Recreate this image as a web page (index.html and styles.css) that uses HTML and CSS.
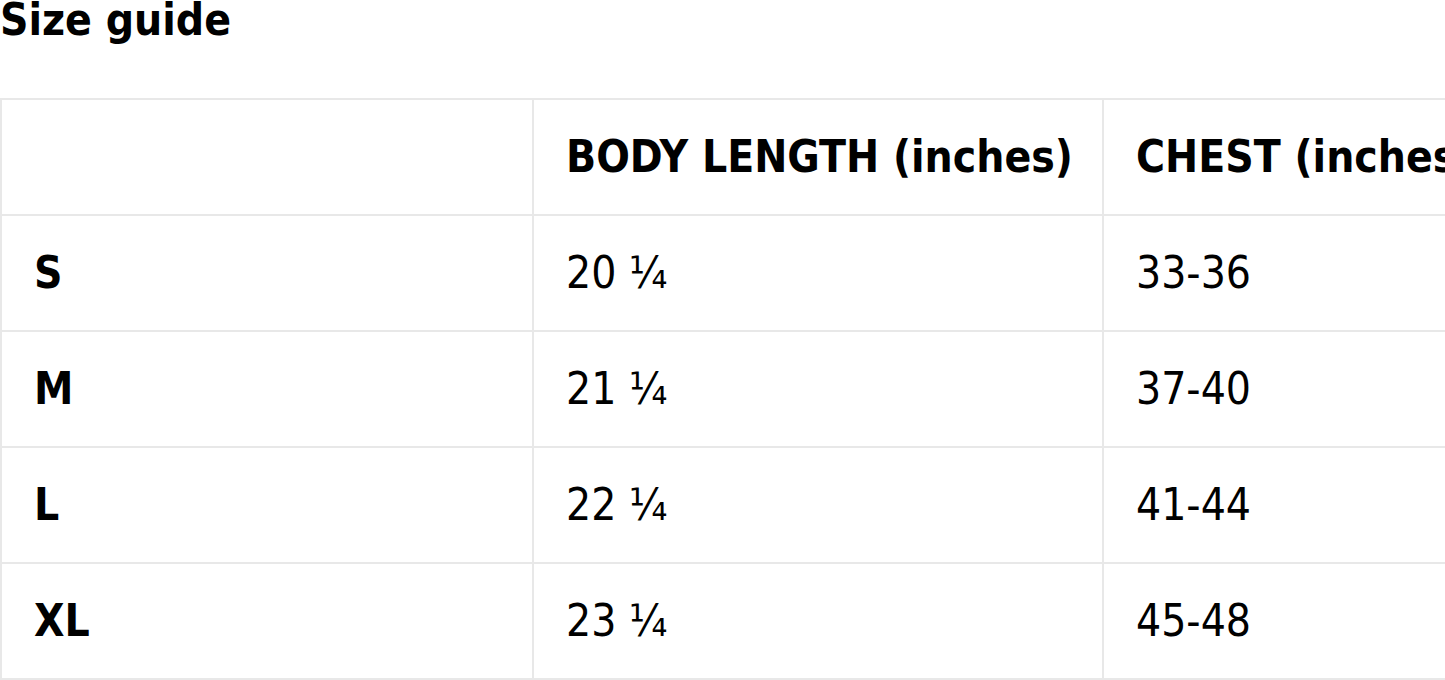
FILE: index.html
```html
<!DOCTYPE html>
<html lang="en">
<head>
<meta charset="utf-8">
<title>Size guide</title>
<link rel="stylesheet" href="styles.css">
</head>
<body>
<h2 class="title">Size guide</h2>
<table class="sizes">
  <colgroup>
    <col class="c1"><col class="c2"><col class="c3">
  </colgroup>
  <thead>
    <tr><th></th><th>BODY LENGTH (inches)</th><th>CHEST (inches)</th></tr>
  </thead>
  <tbody>
    <tr><th>S</th><td>20 ¼</td><td>33-36</td></tr>
    <tr><th>M</th><td>21 ¼</td><td>37-40</td></tr>
    <tr><th>L</th><td>22 ¼</td><td>41-44</td></tr>
    <tr><th>XL</th><td>23 ¼</td><td>45-48</td></tr>
  </tbody>
</table>
</body>
</html>
```
FILE: styles.css
```css
html, body {
  margin: 0;
  padding: 0;
  background: #fff;
  overflow: hidden;
}
body {
  font-family: "DejaVu Sans Condensed", "DejaVu Sans", sans-serif;
  font-stretch: condensed;
  font-size: 44px;
  color: #000;
}
.title {
  font-size: 44px;
  font-weight: bold;
  line-height: 40px;
  margin: 0 0 58px 0;
}
.sizes {
  border-collapse: collapse;
  table-layout: fixed;
  width: 1702px;
}
.sizes .c1 { width: 532px; }
.sizes .c2 { width: 570px; }
.sizes .c3 { width: 600px; }
.sizes th, .sizes td {
  border: 2px solid #e8e8e8;
  padding: 32px 32px;
  line-height: 50px;
  text-align: left;
  white-space: nowrap;
  overflow: hidden;
}
.sizes th { font-weight: bold; }
.sizes td { font-weight: normal; }
```
